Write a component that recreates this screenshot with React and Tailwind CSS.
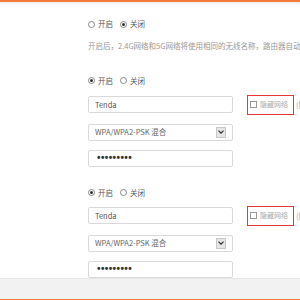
const FONT = { fontFamily: '"Noto Sans CJK SC", "Liberation Sans", sans-serif' };

function Radio({ checked, label }) {
  return (
    <label className="flex items-center gap-[3px]">
      <span className="w-[7px] h-[7px] rounded-full border border-[#8a8a8a] bg-white flex items-center justify-center">
        {checked && <span className="w-[3px] h-[3px] rounded-full bg-[#333]" />}
      </span>
      <span className="text-[#555]">{label}</span>
    </label>
  );
}

function RadioRow({ on }) {
  return (
    <div className="flex items-center gap-[7px] h-[10px]">
      <Radio checked={on} label="开启" />
      <Radio checked={!on} label="关闭" />
    </div>
  );
}

function Box({ children, className = '' }) {
  return (
    <div className={`w-[145px] h-[17px] shrink-0 border border-[#d9d9d9] rounded-[2px] bg-white flex items-center px-[6px] ${className}`}>
      {children}
    </div>
  );
}

function WifiBlock() {
  return (
    <div className="flex flex-col">
      <div className="flex items-center">
        <Box><span className="text-[#555]">Tenda</span></Box>
        <div className="ml-[14px] h-[20px] w-[47px] shrink-0 border-[1.5px] border-[#e53935] flex items-center pl-[2px] gap-[3px]">
          <span className="w-[7px] h-[7px] border border-[#999] bg-white" />
          <span className="text-[#aaa] text-[7px]">隐藏网络</span>
        </div>
        <span className="ml-[2px] text-[#aaa]">(隐藏后需手动输入)</span>
      </div>
      <Box className="mt-[9px] justify-between">
        <span className="text-[#666]">WPA/WPA2-PSK 混合</span>
        <span className="w-[10px] h-[11px] bg-[#e6e6e6] border border-[#c8c8c8] flex items-center justify-center">
          <svg width="6" height="4" viewBox="0 0 6 4">
            <path d="M0.5 0.6 L3 3.2 L5.5 0.6" fill="none" stroke="#333" strokeWidth="1.2" />
          </svg>
        </span>
      </Box>
      <Box className="mt-[9px] pl-[8px]">
        <span className="text-[#333] font-bold text-[10px] tracking-[0.4px]" style={{ fontFamily: '"Liberation Sans", sans-serif' }}>•••••••••</span>
      </Box>
    </div>
  );
}

export default function App() {
  return (
    <div className="w-[300px] h-[300px] overflow-hidden bg-white flex flex-col text-[7.5px] leading-none whitespace-nowrap" style={FONT}>
      <div className="h-[2px] bg-[#f37b3c] shrink-0" />
      <div className="h-[3px] bg-gradient-to-b from-[#ececec] to-white shrink-0" />
      <div className="flex-1 pl-[88px] flex flex-col">
        <div className="mt-[14px]"><RadioRow on={false} /></div>
        <p className="mt-[13px] text-[#999]">开启后，2.4G网络和5G网络将使用相同的无线名称，路由器自动选择</p>
        <div className="mt-[26px]"><RadioRow on={true} /></div>
        <div className="mt-[9px]"><WifiBlock /></div>
        <div className="mt-[21px]"><RadioRow on={true} /></div>
        <div className="mt-[8px]"><WifiBlock /></div>
      </div>
      <div className="h-[21px] bg-[#f2f2f2] border-t border-[#e6e6e6] shrink-0" />
      <div className="h-[2px] bg-[#f37b3c] shrink-0" />
    </div>
  );
}
